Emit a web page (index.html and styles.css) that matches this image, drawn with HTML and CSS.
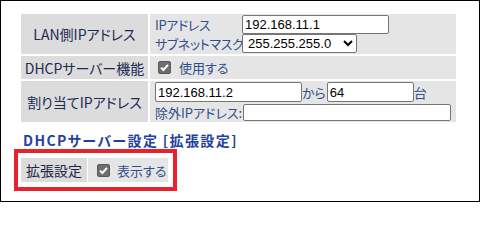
FILE: index.html
```html
<!DOCTYPE html>
<html lang="ja">
<head>
<meta charset="utf-8">
<title>DHCP</title>
<link rel="stylesheet" href="styles.css">
</head>
<body>
<div class="frame">
  <table class="settings">
    <tr class="r1">
      <th>LAN側IPアドレス</th>
      <td>
        <div class="pair">
          <span class="lbl">IPアドレス</span>
          <input class="ip" type="text" value="192.168.11.1">
          <span class="lbl">サブネットマスク</span>
          <select class="mask"><option>255.255.255.0</option></select>
        </div>
      </td>
    </tr>
    <tr class="r2">
      <th>DHCPサーバー機能</th>
      <td>
        <label class="chk">
          <svg class="box" width="13" height="13" viewBox="0 0 13 13"><rect x="0.5" y="0.5" width="12" height="12" rx="1.5" fill="#6e6e6e" stroke="#5a5a5a"/><path d="M3 6.6 L5.4 9 L10 3.8" fill="none" stroke="#fff" stroke-width="2"/></svg>
          <span class="lbl">使用する</span>
        </label>
      </td>
    </tr>
    <tr class="r3">
      <th>割り当てIPアドレス</th>
      <td>
        <div class="line l1">
          <input class="start" type="text" value="192.168.11.2"><span class="lbl">から</span><input class="count" type="text" value="64"><span class="lbl">台</span>
        </div>
        <div class="line l2">
          <span class="lbl">除外IPアドレス:</span><input class="excl" type="text" value="">
        </div>
      </td>
    </tr>
  </table>
  <h2 class="heading">DHCPサーバー設定 [拡張設定]</h2>
  <div class="highlight">
    <table class="ext">
      <tr>
        <th>拡張設定</th>
        <td>
          <label class="chk">
            <svg class="box" width="13" height="13" viewBox="0 0 13 13"><rect x="0.5" y="0.5" width="12" height="12" rx="1.5" fill="#6e6e6e" stroke="#5a5a5a"/><path d="M3 6.6 L5.4 9 L10 3.8" fill="none" stroke="#fff" stroke-width="2"/></svg>
            <span class="lbl">表示する</span>
          </label>
        </td>
      </tr>
    </table>
  </div>
</div>
</body>
</html>
```
FILE: styles.css
```css
html, body {
  margin: 0;
  padding: 0;
  background: #fff;
}
.frame {
  width: 480px;
  height: 202px;
  box-sizing: border-box;
  border: 1px solid #000;
  overflow: hidden;
  font-family: "Noto Sans CJK JP", "Noto Sans", sans-serif;
  font-feature-settings: "palt";
}
.settings {
  border-collapse: separate;
  border-spacing: 2px;
  margin: 11px 0 0 18px;
}
.settings th {
  width: 127px;
  padding: 0;
  background: #dcdcdc;
  color: #1d2a52;
  font-weight: normal;
  font-size: 14px;
  line-height: 18px;
  text-align: center;
  box-sizing: border-box;
  white-space: nowrap;
}
.settings td {
  width: 306px;
  padding: 1px 0 1px 5px;
  background: #e5e5e5;
  box-sizing: border-box;
  vertical-align: top;
}
.r1 th, .r1 td { height: 40px; }
.r2 th, .r2 td { height: 23px; }
.r3 th, .r3 td { height: 41px; }
.lbl {
  color: #2f4e8c;
  font-size: 13px;
  line-height: 17px;
  white-space: nowrap;
}
.pair .lbl { letter-spacing: -0.4px; }
.pair {
  display: grid;
  grid-template-columns: 87px auto;
  grid-auto-rows: 19px;
  align-items: center;
  justify-items: start;
}
input, select {
  font-family: "Liberation Sans", Arial, sans-serif;
  font-size: 13px;
  color: #000;
  background: #fff;
  border: 1px solid #767676;
  border-radius: 2px;
  box-sizing: border-box;
  padding: 0 2px;
  margin: 0;
}
.ip { width: 147px; height: 19px; }
.mask { width: 115px; height: 19px; padding: 0 1px; }
.chk {
  display: flex;
  align-items: center;
  gap: 8px;
  height: 100%;
}
.r2 td { vertical-align: middle; padding-left: 8px; padding-top: 0; padding-bottom: 0; }
.r2 .box { margin-top: -1px; }
.line {
  display: flex;
  align-items: center;
}
.l1 { height: 20px; }
.l1 .start { width: 147px; height: 20px; }
.l1 .count { width: 87px; height: 20px; margin-left: 1px; }
.l2 { height: 17px; margin-top: 2px; }
.l2 .excl { width: 208px; height: 17px; margin-left: 1px; }
.heading {
  margin: 8px 0 0 22px;
  font-size: 14px;
  line-height: 17px;
  height: 17px;
  font-weight: bold;
  color: #1f42a0;
  letter-spacing: 1.4px;
}
.highlight {
  display: inline-block;
  margin-left: 13px;
  border: 4px solid #e8212b;
  padding: 4px 4px 4px 2px;
  vertical-align: top;
}
.ext {
  border-collapse: separate;
  border-spacing: 1px;
}
.ext th {
  width: 66px;
  height: 24px;
  padding: 0;
  background: #dcdcdc;
  color: #1d2544;
  font-weight: normal;
  font-size: 14px;
  line-height: 18px;
  text-align: center;
}
.ext td {
  width: 80px;
  height: 24px;
  padding: 0 0 0 9px;
  box-sizing: border-box;
  background: #e5e5e5;
}
.ext .chk { gap: 7px; }
```
